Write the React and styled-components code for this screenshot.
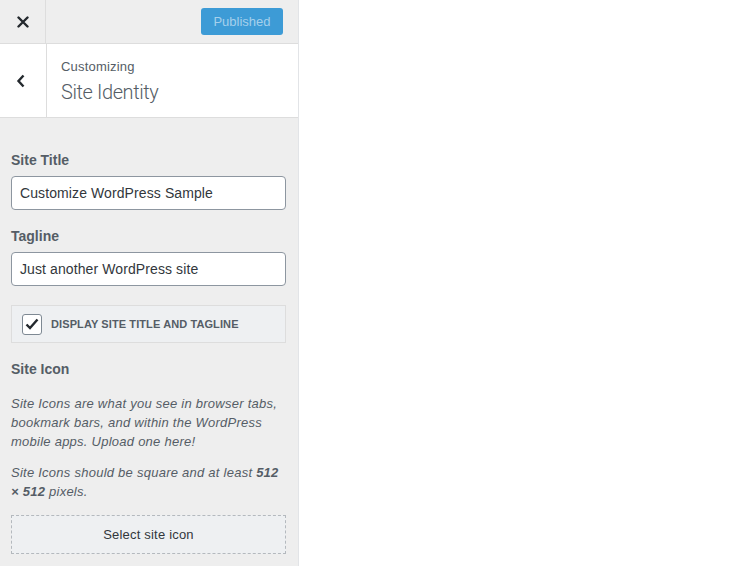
import React from "react";
import styled, { createGlobalStyle } from "styled-components";

const Global = createGlobalStyle`
  html, body { margin: 0; padding: 0; background: #fff; }
  body { font-family: "Liberation Sans", Arial, sans-serif; -webkit-font-smoothing: antialiased; }
  * { box-sizing: border-box; }
`;

const Page = styled.div`
  display: flex;
  width: 749px;
  height: 566px;
  overflow: hidden;
  background: #fff;
`;

const Sidebar = styled.aside`
  width: 299px;
  height: 566px;
  background: #eeeeee;
  border-right: 1px solid #e2e4e7;
  display: flex;
  flex-direction: column;
  color: #555d66;
`;

const TopBar = styled.div`
  height: 44px;
  display: flex;
  align-items: center;
  border-bottom: 1px solid #dddddd;
  background: #eeeeee;
`;

const CloseButton = styled.div`
  width: 46px;
  height: 43px;
  border-right: 1px solid #dddddd;
  display: flex;
  align-items: center;
  justify-content: center;
  color: #23282d;
`;

const PublishButton = styled.div`
  margin-left: auto;
  margin-right: 15px;
  width: 82px;
  height: 27px;
  border-radius: 3px;
  background: #3d9bd6;
  color: #a5d0ec;
  font-size: 13px;
  display: flex;
  align-items: center;
  justify-content: center;
`;

const SectionHeader = styled.div`
  height: 74px;
  display: flex;
  background: #fff;
  border-bottom: 1px solid #dddddd;
`;

const BackButton = styled.div`
  width: 47px;
  border-right: 1px solid #dddddd;
  display: flex;
  align-items: center;
  justify-content: center;
  color: #23282d;
  padding-right: 4px;
`;

const Titles = styled.div`
  display: flex;
  flex-direction: column;
  padding: 14px 0 0 14px;
`;

const Small = styled.span`
  font-size: 13px;
  color: #555d66;
  line-height: 17px;
  letter-spacing: 0.2px;
`;

const Big = styled.span`
  font-family: Roboto, "Liberation Sans", sans-serif;
  font-size: 20px;
  font-weight: 300;
  color: #555d66;
  line-height: 26px;
  margin-top: 4px;
  letter-spacing: -0.4px;
`;

const Content = styled.div`
  padding: 0 12px 0 11px;
  display: flex;
  flex-direction: column;
`;

const Label = styled.div`
  font-size: 14px;
  font-weight: 700;
  color: #555d66;
  line-height: 18px;
  margin-top: ${(p) => p.$top}px;
  margin-bottom: 7px;
`;

const Input = styled.div`
  height: 34px;
  border: 1px solid #8d96a0;
  border-radius: 4px;
  background: #fff;
  display: flex;
  align-items: center;
  padding: 0 8px;
  font-size: 14px;
  color: #32373c;
  letter-spacing: 0.1px;
`;

const CheckRow = styled.div`
  margin-top: 19px;
  height: 38px;
  border: 1px solid #dddddd;
  background: #eef0f2;
  display: flex;
  align-items: center;
  padding-left: 10px;
  gap: 9px;
`;

const CheckBox = styled.div`
  width: 20px;
  height: 21px;
  border: 1px solid #7e8993;
  border-radius: 3px;
  background: #fff;
  display: flex;
  align-items: center;
  justify-content: center;
`;

const CheckLabel = styled.span`
  font-size: 11px;
  font-weight: 700;
  text-transform: uppercase;
  color: #555d66;
  letter-spacing: 0.1px;
`;

const Desc = styled.p`
  margin: ${(p) => p.$top}px 0 0;
  font-size: 13px;
  font-style: italic;
  line-height: 19px;
  letter-spacing: 0.25px;
  color: #555d66;
  b { font-weight: 700; }
`;

const SelectButton = styled.div`
  margin-top: 14px;
  height: 39px;
  border: 1px dashed #b4b9be;
  background: #eef0f2;
  display: flex;
  align-items: center;
  justify-content: center;
  font-size: 13px;
  color: #32373c;
  letter-spacing: 0.2px;
`;

const Preview = styled.main`
  flex: 1;
  background: #fff;
`;

export default function App() {
  return (
    <Page>
      <Global />
      <Sidebar>
        <TopBar>
          <CloseButton>
            <svg width="12" height="12" viewBox="0 0 12 12">
              <path d="M1.5 1.5 L10.5 10.5 M10.5 1.5 L1.5 10.5" stroke="#23282d" strokeWidth="2.4" strokeLinecap="round" />
            </svg>
          </CloseButton>
          <PublishButton>Published</PublishButton>
        </TopBar>
        <SectionHeader>
          <BackButton>
            <svg width="10" height="14" viewBox="0 0 10 14">
              <path d="M7.5 1.5 L2.5 7 L7.5 12.5" fill="none" stroke="#23282d" strokeWidth="2.4" />
            </svg>
          </BackButton>
          <Titles>
            <Small>Customizing</Small>
            <Big>Site Identity</Big>
          </Titles>
        </SectionHeader>
        <Content>
          <Label $top={33}>Site Title</Label>
          <Input>Customize WordPress Sample</Input>
          <Label $top={17}>Tagline</Label>
          <Input>Just another WordPress site</Input>
          <CheckRow>
            <CheckBox>
              <svg width="14" height="12" viewBox="0 0 14 12">
                <path d="M1.5 6.5 L5 10 L12.5 1.5" fill="none" stroke="#23282d" strokeWidth="2.4" />
              </svg>
            </CheckBox>
            <CheckLabel>Display Site Title and Tagline</CheckLabel>
          </CheckRow>
          <Label $top={17}>Site Icon</Label>
          <Desc $top={9}>
            Site Icons are what you see in browser tabs, bookmark bars, and within the WordPress mobile apps. Upload one here!
          </Desc>
          <Desc $top={12}>
            Site Icons should be square and at least <b>512</b> <b>× 512</b> pixels.
          </Desc>
          <SelectButton>Select site icon</SelectButton>
        </Content>
      </Sidebar>
      <Preview />
    </Page>
  );
}
